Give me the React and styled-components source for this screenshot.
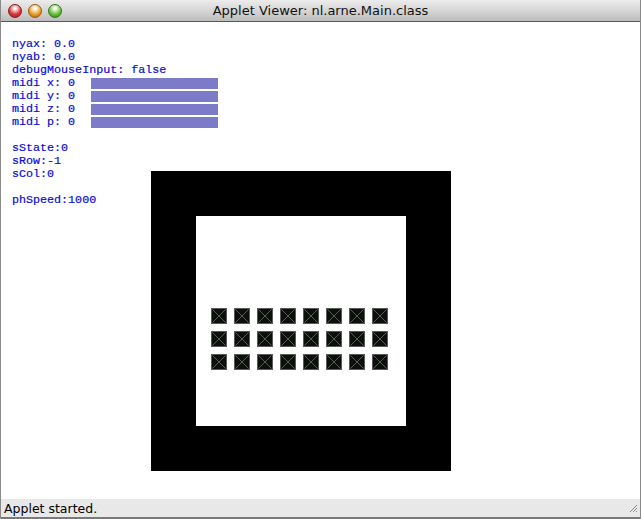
import React from 'react';
import styled, { createGlobalStyle } from 'styled-components';

const GlobalStyle = createGlobalStyle`
  html, body { margin: 0; padding: 0; background: #ffffff; }
  body { width: 641px; height: 519px; overflow: hidden; }
`;

const Window = styled.div`
  width: 641px;
  height: 519px;
  display: flex;
  flex-direction: column;
  box-sizing: border-box;
  border-left: 1px solid #8a8a8a;
  border-right: 1px solid #8a8a8a;
  background: #fff;
`;

const TitleBar = styled.div`
  height: 21px;
  flex: none;
  display: flex;
  align-items: center;
  position: relative;
  background: linear-gradient(#ececec, #d6d6d6 50%, #bcbcbc);
  border-bottom: 1px solid #575757;
`;

const Lights = styled.div`
  display: flex;
  gap: 6px;
  padding-left: 7px;
`;

const Light = styled.span`
  width: 14px;
  height: 14px;
  border-radius: 50%;
  box-sizing: border-box;
  border: 1px solid ${({ edge }) => edge};
  background: radial-gradient(circle at 50% 28%, #fff 0 8%, ${({ color }) => color} 55%, ${({ edge }) => edge} 100%);
`;

const Title = styled.div`
  position: absolute;
  left: 0;
  right: 0;
  text-align: center;
  font-family: "DejaVu Sans", sans-serif;
  font-size: 13px;
  color: #111;
`;

const Canvas = styled.div`
  flex: 1;
  position: relative;
  overflow: hidden;
`;

const Readout = styled.div`
  padding: 16px 0 0 11px;
  font-family: "Liberation Mono", "Courier New", monospace;
  font-size: 11.7px;
  line-height: 13px;
  color: #0a0ad2;
  -webkit-text-stroke: 0.2px #0a0ad2;
  white-space: pre;
`;

const Line = styled.div`
  display: flex;
  align-items: center;
  height: 13px;
`;

const Label = styled.span`
  width: 79px;
`;

const Bar = styled.span`
  width: 127px;
  height: 11px;
  background: #7b7bc9;
`;

const Gap = styled.div`
  height: 13px;
`;

const Frame = styled.div`
  position: absolute;
  left: 150px;
  top: 149px;
  width: 300px;
  height: 300px;
  box-sizing: border-box;
  background: #000;
  padding: 45px;
`;

const Stage = styled.div`
  width: 210px;
  height: 210px;
  background: #fff;
  display: grid;
  grid-template-columns: repeat(8, 16px);
  grid-auto-rows: 16px;
  column-gap: 7px;
  row-gap: 7px;
  align-content: start;
  padding: 92px 0 0 15px;
  box-sizing: border-box;
`;

const Cell = styled.div`
  width: 16px;
  height: 16px;
  box-sizing: border-box;
  border: 1px solid #5a5a5a;
  background: #0b100b;
  display: flex;
`;

const StatusBar = styled.div`
  height: 18px;
  flex: none;
  display: flex;
  align-items: center;
  justify-content: space-between;
  background: #e8e8e8;
  border-bottom: 2px solid #7a7a7a;
  padding: 0 2px 0 3px;
  font-family: "DejaVu Sans", sans-serif;
  font-size: 12.5px;
  color: #000;
`;

const Cross = () => (
  <svg width="14" height="14" viewBox="0 0 14 14">
    <path d="M0.5 0.5 L13.5 13.5 M13.5 0.5 L0.5 13.5" stroke="#5a5a5a" strokeWidth="1" />
  </svg>
);

const Grip = () => (
  <svg width="10" height="10" viewBox="0 0 10 10">
    <path d="M9 2 L2 9 M9 5 L5 9 M9 8 L8 9" stroke="#8c8c8c" strokeWidth="1" />
  </svg>
);

const midi = ['x', 'y', 'z', 'p'];

export default function App() {
  return (
    <>
      <GlobalStyle />
      <Window>
        <TitleBar>
          <Lights>
            <Light color="#e0393a" edge="#8e1a1a" />
            <Light color="#f0a22a" edge="#9a5a10" />
            <Light color="#6cc23a" edge="#2f7a18" />
          </Lights>
          <Title>Applet Viewer: nl.arne.Main.class</Title>
        </TitleBar>
        <Canvas>
          <Readout>
            <Line>nyax: 0.0</Line>
            <Line>nyab: 0.0</Line>
            <Line>debugMouseInput: false</Line>
            {midi.map((m) => (
              <Line key={m}>
                <Label>midi {m}: 0</Label>
                <Bar />
              </Line>
            ))}
            <Gap />
            <Line>sState:0</Line>
            <Line>sRow:-1</Line>
            <Line>sCol:0</Line>
            <Gap />
            <Line>phSpeed:1000</Line>
          </Readout>
          <Frame>
            <Stage>
              {Array.from({ length: 24 }, (_, i) => (
                <Cell key={i}>
                  <Cross />
                </Cell>
              ))}
            </Stage>
          </Frame>
        </Canvas>
        <StatusBar>
          <span>Applet started.</span>
          <Grip />
        </StatusBar>
      </Window>
    </>
  );
}
